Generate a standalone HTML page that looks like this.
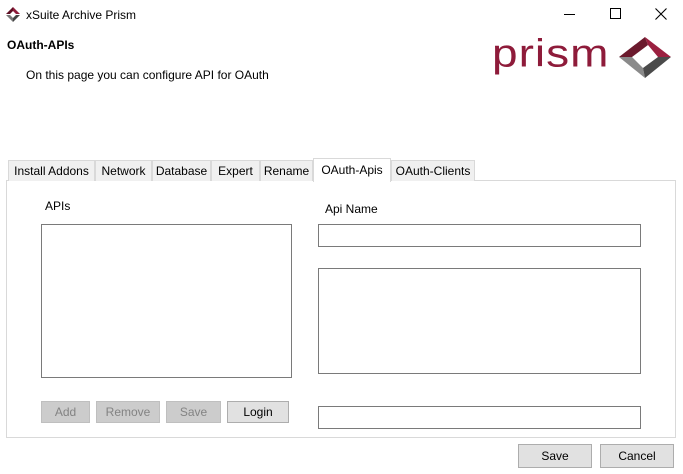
<!DOCTYPE html>
<html><head><style>
*{margin:0;padding:0;box-sizing:border-box}
body{width:683px;height:474px;background:#fff;font-family:"Liberation Sans",sans-serif;font-size:12px;color:#000;position:relative;overflow:hidden}
.a{position:absolute}
.tab{position:absolute;top:160px;height:21px;border:1px solid #d9d9d9;border-bottom:none;background:#f0f0f0;font-size:12px;line-height:20px;text-align:center;white-space:nowrap}
.btn{position:absolute;border:1px solid #adadad;background:#e1e1e1;text-align:center;font-size:12px}
.dis{background:#cccccc;border-color:#bfbfbf;color:#838383}
.box{position:absolute;border:1px solid #7a7a7a;background:#fff}
</style></head><body>
<svg class="a" style="left:6px;top:7px" width="14" height="16" viewBox="0 0 14 16"><polygon points="7,0 14,7 10,7 7,4" fill="#8e1b3a"/><polygon points="7,0 0,7 4,7 7,4" fill="#5e1024"/><polygon points="0,8 7,15 7,11 4,8" fill="#777"/><polygon points="14,8 7,15 7,11 10,8" fill="#444"/></svg>
<div class="a" style="left:26px;top:8px">xSuite Archive Prism</div>
<div class="a" style="left:564px;top:14px;width:11px;height:1px;background:#000"></div>
<div class="a" style="left:610px;top:8px;width:11px;height:11px;border:1px solid #000"></div>
<svg class="a" style="left:655px;top:8px" width="12" height="12"><path d="M0.5 0.5L11.5 11.5M11.5 0.5L0.5 11.5" stroke="#000" stroke-width="1.1"/></svg>
<div class="a" style="left:7px;top:38px;font-weight:bold">OAuth-APIs</div>
<div class="a" style="left:26px;top:68px">On this page you can configure API for OAuth</div>
<div class="a" style="left:492px;top:26px;font-size:46px;color:#8e1b3a;letter-spacing:1px;font-weight:300;transform:scaleY(0.85)">prism</div>
<svg class="a" style="left:617px;top:35px" width="56" height="44" viewBox="0 0 56 44">
<polygon points="28,2 2,22 15,22 31,10" fill="#6b1a2d"/>
<polygon points="28,2 54,22 41,22 31,10" fill="#9b2040"/>
<polygon points="2,22 28,43 26,33 15,22" fill="#8a8a8a"/>
<polygon points="54,22 28,43 26,33 41,22" fill="#4a4a4a"/>
</svg>
<div class="a" style="left:6px;top:180px;width:670px;height:258px;border:1px solid #d9d9d9;background:#fff"></div>
<div class="tab" style="left:8px;width:87px">Install Addons</div>
<div class="tab" style="left:95px;width:57px">Network</div>
<div class="tab" style="left:152px;width:59px">Database</div>
<div class="tab" style="left:211px;width:49px">Expert</div>
<div class="tab" style="left:260px;width:53px">Rename</div>
<div class="tab" style="left:313px;top:158px;width:78px;height:24px;background:#fff;line-height:22px">OAuth-Apis</div>
<div class="tab" style="left:391px;width:84px">OAuth-Clients</div>
<div class="a" style="left:45px;top:199px">APIs</div>
<div class="a" style="left:325px;top:202px">Api Name</div>
<div class="box" style="left:41px;top:224px;width:251px;height:154px"></div>
<div class="box" style="left:318px;top:224px;width:323px;height:23px"></div>
<div class="box" style="left:318px;top:268px;width:323px;height:106px"></div>
<div class="box" style="left:318px;top:406px;width:323px;height:23px"></div>
<div class="btn dis" style="left:41px;top:401px;width:49px;height:22px;line-height:20px">Add</div>
<div class="btn dis" style="left:96px;top:401px;width:64px;height:22px;line-height:20px">Remove</div>
<div class="btn dis" style="left:166px;top:401px;width:55px;height:22px;line-height:20px">Save</div>
<div class="btn" style="left:227px;top:401px;width:62px;height:22px;line-height:20px">Login</div>
<div class="btn" style="left:518px;top:444px;width:74px;height:24px;line-height:22px">Save</div>
<div class="btn" style="left:600px;top:444px;width:74px;height:24px;line-height:22px">Cancel</div>
</body></html>
